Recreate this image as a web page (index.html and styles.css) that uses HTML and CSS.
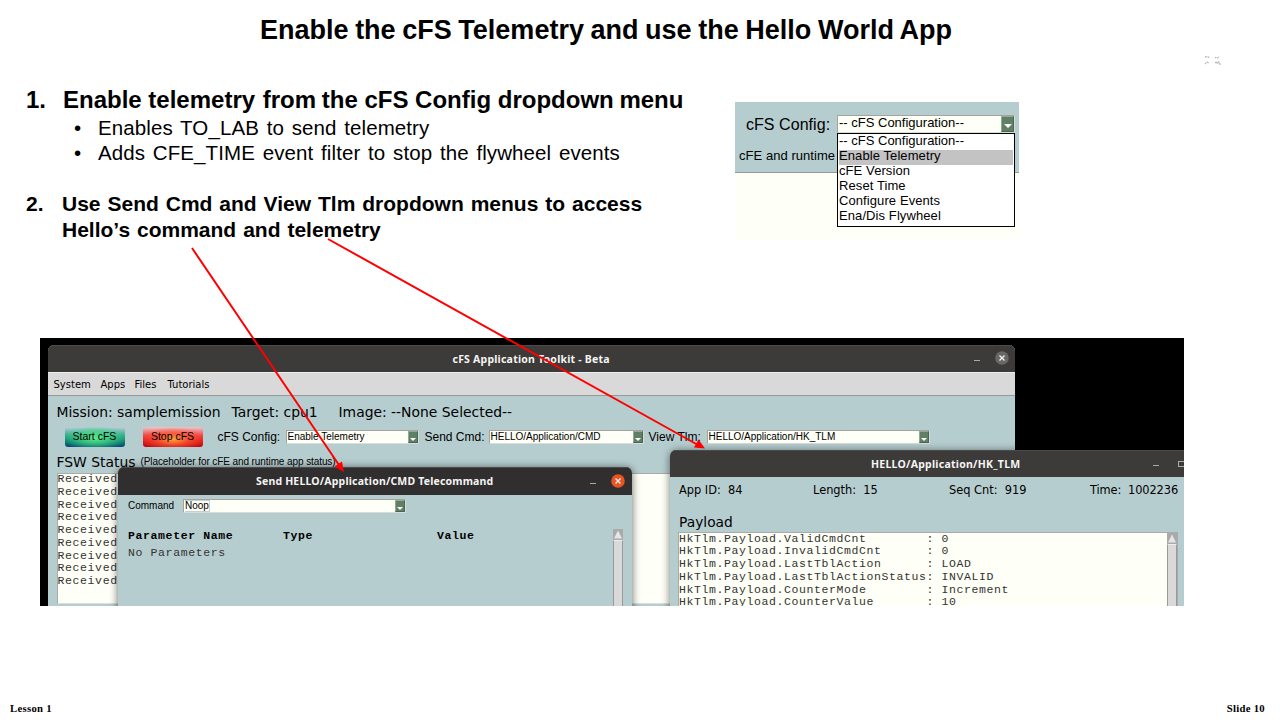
FILE: index.html
```html
<!DOCTYPE html>
<html lang="en">
<head>
<meta charset="utf-8">
<title>Enable the cFS Telemetry and use the Hello World App</title>
<link rel="stylesheet" href="styles.css">
</head>
<body>
<main class="slide">
  <h1 class="title">Enable the cFS Telemetry and use the Hello World App</h1>
  <svg class="expand" width="18" height="12" viewBox="0 0 18 12"><path d="M2 2l2-.5 3 1.500M16 2l-2 1-2-.5M2 9l2-2 2 1M12 7.500l4-.5 1 2-3-1"/></svg>
  <section class="content">
    <ol class="steps">
      <li class="step step-one"><span class="num">1.</span><span class="t1">Enable telemetry <span class="from">from</span> the cFS Config <span class="drop">dropdown</span> menu</span></li>
      <li class="sub"><span class="dot">•</span><span class="s1">Enables TO_LAB to send telemetry</span></li>
      <li class="sub"><span class="dot">•</span><span class="s2">Adds CFE_TIME event filter to stop the flywheel events</span></li>
      <li class="step step-two"><span class="num">2.</span><span><span class="t2">Use Send Cmd and View Tlm dropdown menus to access</span><br><span class="t3">Hello’s command and telemetry</span></span></li>
    </ol>
    <div class="config">
      <div class="config-top">
        <div class="config-row">
          <span class="config-label">cFS Config:</span>
          <div class="combo combo-big"><span>-- cFS Configuration--</span><i class="arrow"></i></div>
        </div>
        <div class="config-note">cFE and runtime</div>
      </div>
      <ul class="menu">
        <li>-- cFS Configuration--</li>
        <li class="selected">Enable Telemetry</li>
        <li>cFE Version</li>
        <li>Reset Time</li>
        <li>Configure Events</li>
        <li>Ena/Dis Flywheel</li>
      </ul>
    </div>
  </section>
  <section class="desktop">
    <div class="window main-window">
      <header class="bar"><span class="bar-title bt1">cFS Application Toolkit - Beta</span>
        <i class="min"></i><svg class="close" width="14" height="14" viewBox="0 0 14 14"><circle cx="7" cy="7" r="6.800" fill="#696867"/><path d="M4.500 4.500l5 5M9.500 4.500l-5 5"/></svg></header>
      <nav class="menubar"><span class="m1">System</span><span class="m2">Apps</span><span class="m3">Files</span><span class="m4">Tutorials</span></nav>
      <div class="mission"><span class="i1">Mission: samplemission</span><span class="i2">Target: cpu1</span><span class="i3">Image: --None Selected--</span></div>
      <div class="controls">
        <span class="btn start">Start cFS</span><span class="btn stop">Stop cFS</span>
        <span class="label l1">cFS Config:</span><div class="combo c1"><span>Enable Telemetry</span><i class="arrow"></i></div>
        <span class="label l2">Send Cmd:</span><div class="combo c2"><span>HELLO/Application/CMD</span><i class="arrow"></i></div>
        <span class="label l3">View Tlm:</span><div class="combo c3"><span>HELLO/Application/HK_TLM</span><i class="arrow"></i></div>
      </div>
      <div class="status"><span class="fsw">FSW Status</span><span class="hint">(Placeholder for cFE and runtime app status)</span></div>
      <div class="log"><div>Received</div><div>Received</div><div>Received</div><div>Received</div><div>Received</div><div>Received</div><div>Received</div><div>Received</div><div>Received</div></div>
    </div>
    <div class="window send-window">
      <header class="bar dark"><span class="bar-title bt2">Send HELLO/Application/CMD Telecommand</span>
        <i class="min"></i><svg class="close" width="14" height="14" viewBox="0 0 14 14"><circle cx="7" cy="7" r="6.800" fill="#e95420"/><path d="M4.500 4.500l5 5M9.500 4.500l-5 5"/></svg></header>
      <div class="command"><span class="cmd-label">Command</span><div class="combo c4"><span class="noop">Noop</span><i class="arrow"></i></div></div>
      <div class="params">
        <div class="table">
          <div class="row head"><span>Parameter Name</span><span>Type</span><span>Value</span></div>
          <div class="row">No Parameters</div>
        </div>
        <div class="scroll"><svg width="10" height="11" viewBox="0 0 10 11"><path d="M5 1.500L9 9.500H1z"/></svg><i></i></div>
      </div>
    </div>
    <div class="window tlm-window">
      <header class="bar"><span class="bar-title bt3">HELLO/Application/HK_TLM</span><i class="min"></i><i class="max"></i></header>
      <div class="info"><span class="f1">App ID:&nbsp; 84</span><span class="f2">Length:&nbsp; 15</span><span class="f3">Seq Cnt:&nbsp; 919</span><span class="f4">Time:&nbsp; 1002236</span></div>
      <div class="payload">Payload</div>
      <div class="values">
        <pre>HkTlm.Payload.ValidCmdCnt        : 0
HkTlm.Payload.InvalidCmdCnt      : 0
HkTlm.Payload.LastTblAction      : LOAD
HkTlm.Payload.LastTblActionStatus: INVALID
HkTlm.Payload.CounterMode        : Increment
HkTlm.Payload.CounterValue       : 10</pre>
        <div class="scroll"><svg width="10" height="11" viewBox="0 0 10 11"><path d="M5 1.500L9 9.500H1z"/></svg><i></i></div>
      </div>
    </div>
  </section>
  <footer class="footer"><span class="lesson">Lesson 1</span><span class="page">Slide 10</span></footer>
  <svg class="pointers" width="1280" height="720" viewBox="0 0 1280 720">
    <path d="M192 248L339 465M328 239L698 445"/>
    <path class="tip" d="M344 472L334.500 466.500 342 461.500zM705 448.500L694 447.500 698.500 439.500z"/>
  </svg>
</main>
</body>
</html>
```
FILE: styles.css
```css
* { box-sizing: border-box; }
body { margin: 0; background: #fff; color: #000; font-family: "Liberation Sans", Arial, sans-serif; }
i { font-style: normal; display: block; flex: none; }
.slide { position: relative; display: flex; flex-direction: column; width: 1280px; height: 720px; overflow: hidden; white-space: nowrap; }
.title { margin: 0; padding: 14px 0 0 260px; height: 86px; font-size: 27px; line-height: 32px; font-weight: bold; word-spacing: -.9px; }
.expand { position: absolute; left: 1203px; top: 55px; fill: none; stroke: #bbb; stroke-width: 1.3; stroke-dasharray: 2 .7; }
.content { display: flex; height: 252px; }
.steps { list-style: none; margin: 0; padding: 0 0 0 26px; width: 735px; }
.step { display: flex; font-weight: bold; }
.step-one { font-size: 24px; line-height: 28px; height: 29px; }
.step-one .num { width: 37px; }
.from { margin: 0 -1px 0 1px; }
.drop { margin-right: -1px; }
.sub { display: flex; padding-left: 48px; height: 25px; font-size: 20.500px; line-height: 26px; letter-spacing: .1px; word-spacing: 1.900px; }
.dot { width: 24px; letter-spacing: 0; }
.step-two { margin-top: 26px; font-size: 21px; line-height: 26px; word-spacing: 1.100px; }
.step-two .num { width: 36px; }
.config { width: 284px; height: 137px; margin-top: 16px; background: #fefff6; }
.config-top { height: 71px; background: #b6cdcf; border-bottom: 1px solid #969696; }
.config-row { display: flex; padding: 13px 4px 0 11px; justify-content: space-between; }
.config-label { font-size: 16px; line-height: 19px; letter-spacing: .05px; }
.combo { display: flex; justify-content: space-between; height: 14px; background: #fefff6; border: 1px solid #a3a3a0; border-right-color: #d8dddb; border-bottom-color: #d8dddb; font-size: 10px; line-height: 11px; padding-left: 1px; }
.arrow { width: 10px; background: #5f8064; border: 1px solid #486650; border-top-color: #90aa93; border-left-color: #90aa93; display: flex; align-items: center; justify-content: center; padding-top: 4px; }
.arrow::after { content: ""; border: 3px solid transparent; border-top-color: #fff; border-bottom: 0; }
.combo-big { width: 178px; height: 18px; font-size: 13px; line-height: 13px; }
.combo-big .arrow { width: 13px; }
.combo-big .arrow::after { border-width: 4px; border-bottom: 0; }
.config-note { padding-left: 4px; font-size: 13px; line-height: 16px; margin-top: 14px; letter-spacing: .05px; }
.menu { position: relative; z-index: 1; list-style: none; width: 178px; height: 94px; margin: -40px 0 0 102px; padding: 1px 1px 0; background: #fff; border: 1px solid #000; font-size: 13px; line-height: 11px; letter-spacing: .09px; }
.menu li:first-child { letter-spacing: 0; }
.menu .selected { background: #c3c3c3; }
.menu li { height: 15px; }
.desktop { position: relative; width: 1144px; height: 268px; margin-left: 40px; background: #000; overflow: hidden; flex: none; }
.window { position: absolute; background: #b6cdcf; border-radius: 6px 6px 0 0; overflow: hidden; }
.main-window { left: 7.500px; top: 7px; width: 967px; height: 270px; }
.send-window { left: 78px; top: 129px; width: 514px; height: 150px; box-shadow: 0 1px 8px rgba(0,0,0,.6); }
.tlm-window { left: 630px; top: 112px; width: 560px; height: 165px; box-shadow: 0 1px 8px rgba(0,0,0,.55); }
.bar { display: flex; align-items: center; height: 27px; background: #3d3b39; color: #f5f5f3; border-top: 1px solid #4d4b49; font-family: "Noto Sans", sans-serif; font-weight: bold; font-size: 10.500px; letter-spacing: .22px; }
.dark { height: 28px; background: #302e2f; }
.min { width: 6px; height: 1px; margin-top: 3px; background: #aaa; }
.close { flex: none; margin: -2px 7px 0 15px; fill: none; }
.close path { stroke: #f4f4f4; stroke-width: 1.3; }
.bt1 { flex: none; width: 926px; padding-left: 405px; }
.bt2 { flex: none; width: 472px; padding: 0 0 2px 138px; letter-spacing: .18px; }
.bt3 { flex: none; width: 483px; padding-left: 201px; letter-spacing: .26px; }
.max { width: 8px; height: 6px; margin-left: 19px; border: 1px solid #aaa; }
.menubar { display: flex; height: 24px; background: #d9d9d9; border-bottom: 1px solid #999; border-top: 1px solid #eee; font: 10px/23px "DejaVu Sans", sans-serif; padding-left: 6px; }
.m1 { width: 47px; } .m2 { width: 34px; } .m3 { width: 33px; }
.mission { display: flex; height: 31px; padding-left: 9px; font: 13.900px/32px "DejaVu Sans", sans-serif; }
.i1 { width: 175px; } .i2 { width: 107px; }
.controls { display: flex; align-items: center; height: 20px; padding-left: 17px; font-size: 12px; }
.btn { width: 60px; height: 20px; border-radius: 3px; text-align: center; font-size: 10.500px; line-height: 18px; flex: none; }
.start { margin-right: 18px; background: radial-gradient(ellipse 55% 60% at 50% 55%, #62e98a, rgba(65,215,130,.7) 50%, transparent), linear-gradient(#b9cfdb, #2ba487 45%, #0b8070 70%, #074a78); }
.stop { margin-right: 15px; background: radial-gradient(ellipse 55% 60% at 50% 62%, #ffa13d, rgba(250,85,50,.7) 50%, transparent), linear-gradient(#ecc6cb, #ee4040 45%, #e01a1a 70%, #b8060f); }
.label { flex: none; }
.l1 { width: 68px; } .l2 { width: 64px; margin-left: 6px; } .l3 { width: 58px; margin-left: 5px; }
.c1 { width: 133px; } .c2 { width: 155px; } .c3 { width: 223px; }
.status { display: flex; gap: 5px; height: 26px; padding-left: 9px; align-items: center; padding-top: 4px; font: 13.900px "DejaVu Sans", sans-serif; }
.hint { font: 10px "Liberation Sans", Arial, sans-serif; letter-spacing: -.09px; margin-top: -2px; }
.log { width: 906px; height: 131px; margin-left: 9px; background: #fefff6; border: 1px solid #aaa; border-bottom-color: #ddd; font: 11.500px/12.750px "Liberation Mono", "Courier New", monospace; letter-spacing: .62px; color: #333; }
.log div { margin-top: -1px; margin-bottom: 1px; height: 12.750px; }
.command { display: flex; height: 32px; padding: 4px 0 0 10px; font-size: 10px; line-height: 13px; }
.cmd-label { width: 55px; }
.c4 { width: 223px; }
.noop { border: 1px solid #ccc; border-left: 0; line-height: 10px; height: 12px; }
.params { display: flex; height: 120px; }
.table { width: 495px; padding-left: 10px; font: 11.500px/17px "Liberation Mono", "Courier New", monospace; letter-spacing: .62px; color: #333; }
.head { display: grid; grid-template-columns: 155px 154px 1fr; font-weight: bold; color: #000; line-height: 17px; }
.scroll { width: 10px; display: flex; flex-direction: column; background: #aaa; }
.params .scroll { margin-top: 2px; }
.scroll svg { fill: #e6e6e6; flex: none; }
.scroll i { flex: 1; background: #d9d9d9; border: 1px solid #999; border-top-color: #eee; }
.info { display: flex; height: 33px; padding-left: 9px; font: 11.400px/27px "DejaVu Sans", sans-serif; }
.f1 { width: 134px; } .f2 { width: 136px; } .f3 { width: 141px; }
.f4 { letter-spacing: -.12px; }
.payload { height: 22px; padding-left: 9px; font: 13.800px/25px "DejaVu Sans", sans-serif; }
.values { display: flex; width: 500px; height: 90px; margin-left: 8px; background: #fefff6; border: 1px solid #aaa; justify-content: space-between; }
.values pre { margin: -.5px 0 0; font: 11.500px/12.750px "Liberation Mono", "Courier New", monospace; letter-spacing: .6px; color: #333; }
.footer { display: flex; justify-content: space-between; margin-top: auto; height: 19px; padding: 0 15px 0 10px; font: bold 10.700px/14px "Liberation Serif", "Times New Roman", serif; letter-spacing: .3px; }
.pointers { position: absolute; left: 0; top: 0; fill: none; stroke: #f00; stroke-width: 2; }
.pointers .tip { fill: #f00; stroke: none; }
```
